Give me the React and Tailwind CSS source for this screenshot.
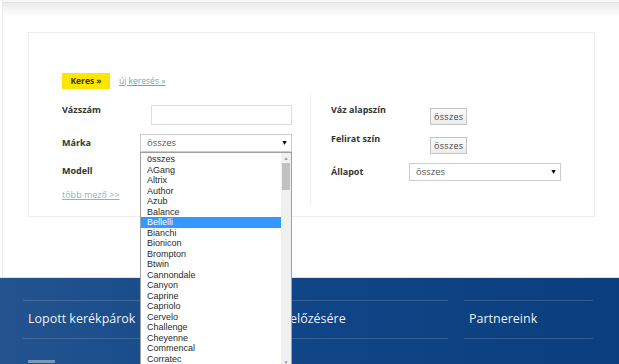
import React from "react";

const brands = [
  "összes", "AGang", "Altrix", "Author", "Azub", "Balance", "Bellelli", "Bianchi", "Bionicon", "Brompton",
  "Btwin", "Cannondale", "Canyon", "Caprine", "Capriolo", "Cervelo", "Challenge", "Cheyenne", "Commencal", "Corratec",
];

function Label({ children, top }) {
  return <div className={`w-[78px] shrink-0 text-[9px] font-bold text-[#333] ${top || ""}`}>{children}</div>;
}

function SelectBox({ width }) {
  return (
    <div className={`${width} h-[18px] border border-[#ccc] bg-white flex items-center justify-between pl-[6px] pr-[3px] text-[9.5px] text-[#555]`}>
      <span>összes</span>
      <span className="text-[7px] text-black">▼</span>
    </div>
  );
}

function ColorButton() {
  return (
    <div className="ml-[21px] h-[17px] px-[3px] border border-[#c4c4c4] bg-gradient-to-b from-[#fbfbfb] to-[#ececec] flex items-center text-[9px] text-[#444] tracking-[0.3px]">
      összes
    </div>
  );
}

function BrandList() {
  return (
    <div className="absolute left-0 top-[18px] w-[152px] h-[215px] bg-white border border-[#a0a0a0] flex font-['Liberation_Sans',Arial,sans-serif] text-[9px] text-[#2a2a2a] z-10">
      <div className="flex-1 pt-[1px]">
        {brands.map((b) => (
          <div
            key={b}
            className={`h-[10.5px] leading-[10.5px] pl-[6px] ${b === "Bellelli" ? "bg-[#3399ff] text-white" : ""}`}
          >
            {b}
          </div>
        ))}
      </div>
      <div className="w-[10px] bg-[#f0f0f0] flex flex-col items-center">
        <div className="h-[10px] text-[5px] text-[#999] leading-[10px]">▲</div>
        <div className="w-[8px] h-[27px] bg-[#c1c1c1]" />
        <div className="flex-1" />
        <div className="h-[8px] text-[5px] text-[#999] leading-[8px]">▼</div>
      </div>
    </div>
  );
}

export default function App() {
  return (
    <div className="w-[619px] h-[364px] overflow-hidden bg-white font-['Open_Sans',sans-serif] relative">
      <div className="h-[277px] border-l border-[#ececec] ml-[2px] flex flex-col">
        <div className="h-[3px] bg-[#f7f7f7] border-b border-[#e2e2e2]" />
        <div className="h-[14px] bg-gradient-to-b from-[#ececec] to-white" />

        <div className="ml-[25px] mt-[15px] w-[567px] h-[185px] border border-[#ececec] pt-[40px] pl-[33px]">
          <div className="flex items-center">
            <div className="h-[16px] w-[48px] bg-[#ffe600] flex items-center justify-center text-[8.5px] font-bold text-[#333]">
              Keres »
            </div>
            <a className="ml-[9px] text-[8.5px] text-[#6aa6b8] underline">új keresés »</a>
          </div>

          <div className="flex mt-[15px]">
            <div className="w-[231px]">
              <div className="flex items-start h-[22px]">
                <Label top="mt-[-1px]">Vázszám</Label>
                <div className="ml-[11px] mt-[1px] w-[141px] h-[20px] border border-[#ddd] bg-white" />
              </div>
              <div className="flex items-center mt-[8px] h-[18px]">
                <Label>Márka</Label>
                <div className="relative">
                  <SelectBox width="w-[152px]" />
                  <BrandList />
                </div>
              </div>
              <div className="flex items-center mt-[10px] h-[18px]">
                <Label>Modell</Label>
              </div>
              <div className="mt-[8px] text-[9px] text-[#8ab5c4] underline">több mező &gt;&gt;</div>
            </div>

            <div className="ml-[17px] -mt-[9px] w-px h-[110px] bg-[#eeeeee]" />

            <div className="ml-[20px]">
              <div className="flex items-start h-[22px]">
                <Label top="mt-[-1px]">Váz alapszín</Label>
                <div className="mt-[4px]">
                  <ColorButton />
                </div>
              </div>
              <div className="flex items-start mt-[7px] h-[22px]">
                <Label top="mt-[-1px]">Felirat szín</Label>
                <div className="mt-[4px]">
                  <ColorButton />
                </div>
              </div>
              <div className="flex items-center mt-[8px] h-[18px]">
                <Label>Állapot</Label>
                <SelectBox width="w-[152px]" />
              </div>
            </div>
          </div>
        </div>
      </div>

      <div className="h-[87px] border-t border-[#d8e2ee] bg-gradient-to-r from-[#23548f] via-[#0f4587] to-[#0b3e7e] flex pl-[23px] pr-[26px] gap-[16px]">
        {["Lopott kerékpárok", "A lopás megelőzésére", "Partnereink"].map((t, i) => (
          <div key={t} className={`${i === 0 ? "w-[175px]" : i === 1 ? "w-[234px]" : "flex-1"} flex flex-col`}>
            <div className="mt-[22px] h-px bg-white/15" />
            <div className="h-[37px] flex items-center pl-[5px] text-[12.5px] text-white/95">{t}</div>
            <div className="h-px bg-white/15" />
            {i === 0 && <div className="mt-[21px] ml-[5px] w-[27px] h-[3px] bg-white/40" />}
          </div>
        ))}
      </div>
    </div>
  );
}
